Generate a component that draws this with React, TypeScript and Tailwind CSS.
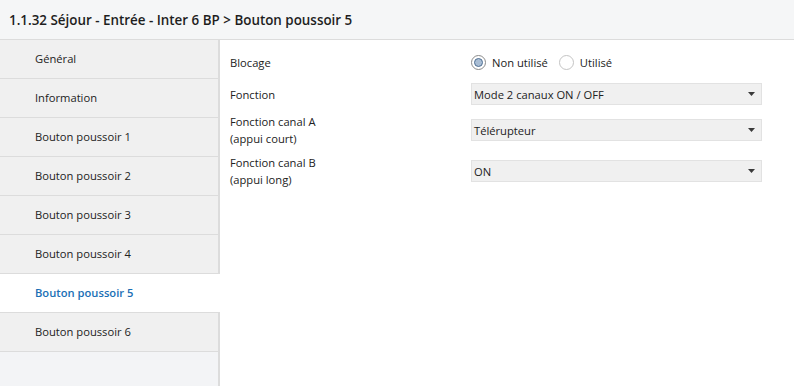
const navItems = [
  'Général',
  'Information',
  'Bouton poussoir 1',
  'Bouton poussoir 2',
  'Bouton poussoir 3',
  'Bouton poussoir 4',
  'Bouton poussoir 5',
  'Bouton poussoir 6',
];

const ACTIVE = 'Bouton poussoir 5';

function Radio({ checked, label }: { checked: boolean; label: string }) {
  return (
    <label className="flex items-center gap-[6px]">
      {checked ? (
        <span className="flex h-[15px] w-[15px] items-center justify-center rounded-full border border-[#8a8a8a] bg-white">
          <span className="h-[9px] w-[9px] rounded-full border border-[#4f6f92] bg-[#a9bdd4]" />
        </span>
      ) : (
        <span className="h-[15px] w-[15px] rounded-full border border-[#c4c4c4] bg-white" />
      )}
      <span>{label}</span>
    </label>
  );
}

function Select({ value }: { value: string }) {
  return (
    <div className="flex h-[22px] w-[291px] items-center justify-between border border-[#e2e2e2] bg-[#f0f0f0] pl-[2px] pr-[6px]">
      <span>{value}</span>
      <svg width="7" height="4" viewBox="0 0 7 4">
        <path d="M0 0H7L3.5 4Z" fill="#3a3a3a" />
      </svg>
    </div>
  );
}

export default function App() {
  return (
    <div
      className="flex h-[386px] w-[794px] flex-col overflow-hidden bg-white text-[11.2px] text-[#222]"
      style={{ fontFamily: '"Open Sans", "Noto Sans", sans-serif' }}
    >
      {/* title bar */}
      <div className="flex h-[40px] shrink-0 items-center border-b border-[#dcdcdc] bg-[#f5f6f7] pl-[9px] pt-px text-[13.4px] font-semibold text-[#1e1e1e]">
        1.1.32 Séjour - Entrée - Inter 6 BP &gt; Bouton poussoir 5
      </div>

      <div className="flex flex-1">
        {/* sidebar */}
        <div className="flex w-[220px] shrink-0 flex-col">
          {navItems.map((item) =>
            item === ACTIVE ? (
              <div
                key={item}
                className="flex h-[39px] shrink-0 items-center border-b border-[#dcdcdc] bg-white pl-[35px] pt-px font-semibold text-[#1b6fb5]"
              >
                {item}
              </div>
            ) : (
              <div
                key={item}
                className="flex h-[39px] shrink-0 items-center border-b border-r-2 border-[#dcdcdc] bg-[#f0f0f0] pl-[35px] pt-px"
              >
                {item}
              </div>
            ),
          )}
          <div className="flex-1 border-r-2 border-[#dcdcdc] bg-[#f3f4f6]" />
        </div>

        {/* parameters */}
        <div className="flex flex-1 flex-col pl-[10px] pt-[10px] leading-[17px]">
          <div className="flex h-[24px] items-center">
            <div className="w-[241px]">Blocage</div>
            <div className="flex items-center gap-[11px]">
              <Radio checked label="Non utilisé" />
              <Radio checked={false} label="Utilisé" />
            </div>
          </div>

          <div className="mt-[9px] flex h-[22px] items-center">
            <div className="w-[241px]">Fonction</div>
            <Select value="Mode 2 canaux ON / OFF" />
          </div>

          <div className="mt-[8px] flex h-[34px] items-center">
            <div className="w-[241px]">
              Fonction canal A
              <br />
              (appui court)
            </div>
            <Select value="Télérupteur" />
          </div>

          <div className="mt-[7px] flex h-[34px] items-center">
            <div className="w-[241px]">
              Fonction canal B
              <br />
              (appui long)
            </div>
            <Select value="ON" />
          </div>
        </div>
      </div>
    </div>
  );
}
